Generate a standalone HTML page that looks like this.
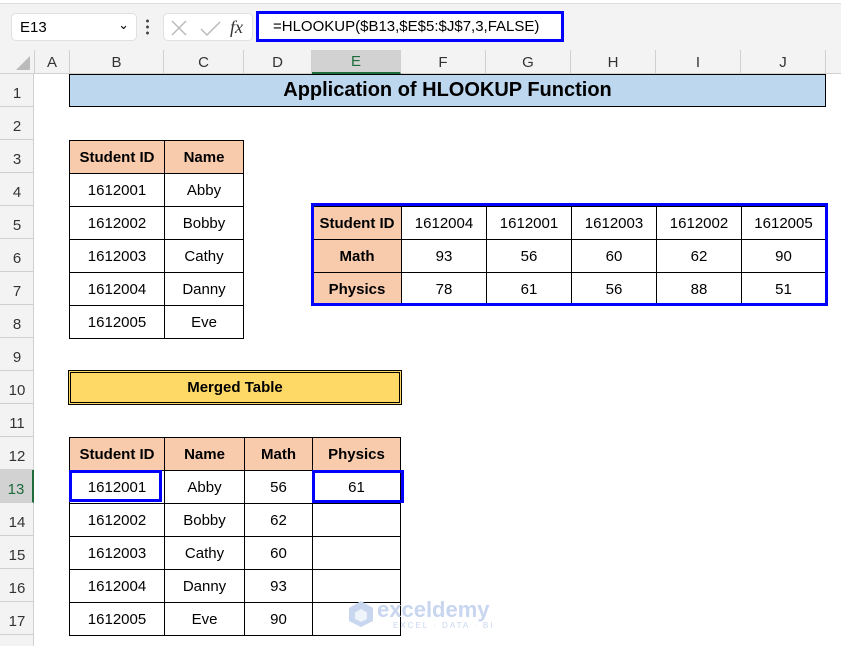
<!DOCTYPE html>
<html><head><meta charset="utf-8"><style>
body{margin:0;width:841px;height:646px;position:relative;overflow:hidden;background:#fff;font-family:"Liberation Sans",sans-serif;}
.a{position:absolute;box-sizing:border-box;}
.c{position:absolute;box-sizing:border-box;display:flex;align-items:center;justify-content:center;font-size:15px;color:#000;border:1px solid #000;background:#fff;}
.h{background:#f8cbad;font-weight:bold;}
.ch{position:absolute;top:50px;height:24px;display:flex;align-items:center;justify-content:center;font-size:15px;color:#333;border-right:1px solid #d0d0d0;box-sizing:border-box;}
.rh{position:absolute;left:0;width:34px;height:33px;display:flex;align-items:flex-end;justify-content:center;padding-bottom:4px;box-sizing:border-box;font-size:15px;color:#333;border-bottom:1px solid #d0d0d0;}
</style></head><body>
<div class="a" style="left:0;top:0;width:841px;height:50px;background:#f3f3f3"></div>
<div class="a" style="left:0;top:0;width:841px;height:4px;background:#fff;border-bottom:1px solid #ddd"></div>
<div class="a" style="left:11px;top:13px;width:126px;height:28px;background:#fff;border:1px solid #e0e0e0;border-radius:5px;font-size:15px;padding:5px 0 0 8px">E13<span style="position:absolute;right:7px;top:3px;font-size:13px">&#8964;</span></div>
<div class="a" style="left:146px;top:18px;width:3px;height:18px;background:radial-gradient(circle,#444 1.3px,transparent 1.6px) 0 0/3px 6px"></div>
<div class="a" style="left:163px;top:13px;width:90px;height:28px;background:#fff;border:1px solid #e0e0e0;border-radius:5px"></div>
<svg class="a" style="left:168px;top:17px" width="85" height="22"><path d="M4 4L18 18M18 4L4 18" stroke="#bbb" stroke-width="1.5"/><path d="M33 12L39 18L52 5" stroke="#bbb" stroke-width="1.5" fill="none"/><text x="62" y="16" font-family="Liberation Serif" font-style="italic" font-size="18" fill="#333">fx</text></svg>
<div class="a" style="left:256px;top:11px;width:308px;height:31px;background:#fff;border:3px solid #0000ff;font-size:15px;padding:4px 0 0 14px">=HLOOKUP($B13,$E$5:$J$7,3,FALSE)</div>
<div class="a" style="left:0;top:50px;width:841px;height:24px;background:#f3f3f3;border-bottom:1px solid #d0d0d0"></div>
<div class="a" style="left:0;top:74px;width:34px;height:572px;background:#f3f3f3;border-right:1px solid #d0d0d0"></div>
<svg class="a" style="left:14px;top:56px" width="18" height="16"><path d="M16 0L16 14L2 14Z" fill="#bbb"/></svg>
<div class="ch" style="left:34px;width:36px;border-left:1px solid #d0d0d0">A</div>
<div class="ch" style="left:70px;width:94px">B</div>
<div class="ch" style="left:164px;width:80px">C</div>
<div class="ch" style="left:244px;width:68px">D</div>
<div class="ch" style="left:312px;width:89px;background:#d2d2d2;color:#1e6b3c;border-bottom:2px solid #1e6b3c">E</div>
<div class="ch" style="left:401px;width:85px">F</div>
<div class="ch" style="left:486px;width:85px">G</div>
<div class="ch" style="left:571px;width:85px">H</div>
<div class="ch" style="left:656px;width:85px">I</div>
<div class="ch" style="left:741px;width:85px">J</div>
<div class="rh" style="top:74px">1</div><div class="rh" style="top:107px">2</div><div class="rh" style="top:140px">3</div><div class="rh" style="top:173px">4</div><div class="rh" style="top:206px">5</div><div class="rh" style="top:239px">6</div><div class="rh" style="top:272px">7</div><div class="rh" style="top:305px">8</div><div class="rh" style="top:338px">9</div><div class="rh" style="top:371px">10</div><div class="rh" style="top:404px">11</div><div class="rh" style="top:437px">12</div>
<div class="rh" style="top:470px;background:#d2d2d2;color:#1e6b3c;border-right:2px solid #1e6b3c">13</div>
<div class="rh" style="top:503px">14</div><div class="rh" style="top:536px">15</div><div class="rh" style="top:569px">16</div><div class="rh" style="top:602px">17</div>

<div class="c" style="left:69px;top:74px;width:757px;height:33px;background:#bdd7ee;font-weight:bold;font-size:20px">Application of HLOOKUP Function</div>

<div class="c h" style="left:69px;top:140px;width:96px;height:34px">Student ID</div><div class="c h" style="left:164px;top:140px;width:80px;height:34px">Name</div>
<div class="c" style="left:69px;top:173px;width:96px;height:34px">1612001</div><div class="c" style="left:164px;top:173px;width:80px;height:34px">Abby</div>
<div class="c" style="left:69px;top:206px;width:96px;height:34px">1612002</div><div class="c" style="left:164px;top:206px;width:80px;height:34px">Bobby</div>
<div class="c" style="left:69px;top:239px;width:96px;height:34px">1612003</div><div class="c" style="left:164px;top:239px;width:80px;height:34px">Cathy</div>
<div class="c" style="left:69px;top:272px;width:96px;height:34px">1612004</div><div class="c" style="left:164px;top:272px;width:80px;height:34px">Danny</div>
<div class="c" style="left:69px;top:305px;width:96px;height:34px">1612005</div><div class="c" style="left:164px;top:305px;width:80px;height:34px">Eve</div>

<div class="c h" style="left:312px;top:206px;width:90px;height:34px">Student ID</div>
<div class="c" style="left:401px;top:206px;width:86px;height:34px">1612004</div><div class="c" style="left:486px;top:206px;width:86px;height:34px">1612001</div><div class="c" style="left:571px;top:206px;width:86px;height:34px">1612003</div><div class="c" style="left:656px;top:206px;width:86px;height:34px">1612002</div><div class="c" style="left:741px;top:206px;width:85px;height:34px">1612005</div>
<div class="c h" style="left:312px;top:239px;width:90px;height:34px">Math</div>
<div class="c" style="left:401px;top:239px;width:86px;height:34px">93</div><div class="c" style="left:486px;top:239px;width:86px;height:34px">56</div><div class="c" style="left:571px;top:239px;width:86px;height:34px">60</div><div class="c" style="left:656px;top:239px;width:86px;height:34px">62</div><div class="c" style="left:741px;top:239px;width:85px;height:34px">90</div>
<div class="c h" style="left:312px;top:272px;width:90px;height:34px">Physics</div>
<div class="c" style="left:401px;top:272px;width:86px;height:34px">78</div><div class="c" style="left:486px;top:272px;width:86px;height:34px">61</div><div class="c" style="left:571px;top:272px;width:86px;height:34px">56</div><div class="c" style="left:656px;top:272px;width:86px;height:34px">88</div><div class="c" style="left:741px;top:272px;width:85px;height:34px">51</div>
<div class="a" style="left:311px;top:203px;width:517px;height:103px;border:3px solid #0000ff"></div>

<div class="c" style="left:68px;top:370px;width:334px;height:35px;background:#ffd966;border:3px double #000;font-weight:bold">Merged Table</div>

<div class="c h" style="left:69px;top:437px;width:96px;height:34px">Student ID</div><div class="c h" style="left:164px;top:437px;width:81px;height:34px">Name</div><div class="c h" style="left:244px;top:437px;width:69px;height:34px">Math</div><div class="c h" style="left:312px;top:437px;width:89px;height:34px">Physics</div>
<div class="c" style="left:69px;top:470px;width:96px;height:34px">1612001</div><div class="c" style="left:164px;top:470px;width:81px;height:34px">Abby</div><div class="c" style="left:244px;top:470px;width:69px;height:34px">56</div><div class="c" style="left:312px;top:470px;width:89px;height:34px">61</div>
<div class="c" style="left:69px;top:503px;width:96px;height:34px">1612002</div><div class="c" style="left:164px;top:503px;width:81px;height:34px">Bobby</div><div class="c" style="left:244px;top:503px;width:69px;height:34px">62</div><div class="c" style="left:312px;top:503px;width:89px;height:34px"></div>
<div class="c" style="left:69px;top:536px;width:96px;height:34px">1612003</div><div class="c" style="left:164px;top:536px;width:81px;height:34px">Cathy</div><div class="c" style="left:244px;top:536px;width:69px;height:34px">60</div><div class="c" style="left:312px;top:536px;width:89px;height:34px"></div>
<div class="c" style="left:69px;top:569px;width:96px;height:34px">1612004</div><div class="c" style="left:164px;top:569px;width:81px;height:34px">Danny</div><div class="c" style="left:244px;top:569px;width:69px;height:34px">93</div><div class="c" style="left:312px;top:569px;width:89px;height:34px"></div>
<div class="c" style="left:69px;top:602px;width:96px;height:34px">1612005</div><div class="c" style="left:164px;top:602px;width:81px;height:34px">Eve</div><div class="c" style="left:244px;top:602px;width:69px;height:34px">90</div><div class="c" style="left:312px;top:602px;width:89px;height:34px"></div>
<div class="a" style="left:69px;top:470px;width:93px;height:32px;border:3px solid #0000ff"></div>
<div class="a" style="left:312px;top:470px;width:92px;height:33px;border:3px solid #0000ff"></div>

<svg class="a" style="left:348px;top:600px" width="26" height="28"><path d="M13 1L25 8L25 21L13 27L1 21L1 8Z" fill="#c9d6ef"/><path d="M13 9L19 12.5L19 19L13 22L7 19L7 12.5Z" fill="#fff" opacity=".7"/></svg>
<div class="a" style="left:377px;top:597px;font-size:22px;font-weight:bold;color:#c9d6ef">exceldemy</div>
<div class="a" style="left:393px;top:621px;font-size:8px;letter-spacing:2px;color:#c9d6ef">EXCEL · DATA · BI</div>
</body></html>
